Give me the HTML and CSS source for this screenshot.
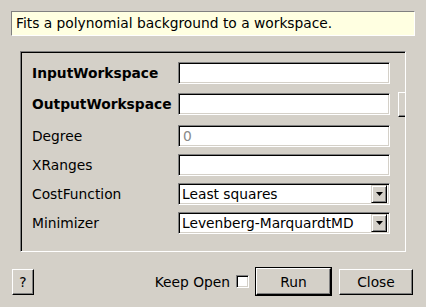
FILE: index.html
```html
<!DOCTYPE html>
<html>
<head>
<meta charset="utf-8">
<link rel="stylesheet" href="styles.css">
</head>
<body>
<div class="dialog">
  <div class="desc">Fits a polynomial background to a workspace.</div>
  <div class="frame">
    <div class="row r1">
      <span class="label bold">InputWorkspace</span>
      <span class="field"></span>
    </div>
    <div class="row r2">
      <span class="label bold">OutputWorkspace</span>
      <span class="field"></span>
      <span class="browse"></span>
    </div>
    <div class="row">
      <span class="label">Degree</span>
      <span class="field"><span class="ph">0</span></span>
    </div>
    <div class="row">
      <span class="label">XRanges</span>
      <span class="field"></span>
    </div>
    <div class="row">
      <span class="label">CostFunction</span>
      <span class="field combo"><span class="ctext">Least squares</span><span class="arrow"><svg width="7" height="4" viewBox="0 0 7 4"><path d="M0 0H7L3.5 4Z" fill="#000"/></svg></span></span>
    </div>
    <div class="row">
      <span class="label">Minimizer</span>
      <span class="field combo"><span class="ctext">Levenberg-MarquardtMD</span><span class="arrow"><svg width="7" height="4" viewBox="0 0 7 4"><path d="M0 0H7L3.5 4Z" fill="#000"/></svg></span></span>
    </div>
  </div>
  <div class="bottom">
    <span class="btn help">?</span>
    <span class="spacer"></span>
    <span class="keep">Keep Open</span>
    <span class="check"></span>
    <span class="btn run"><span class="inner">Run</span></span>
    <span class="btn close">Close</span>
  </div>
</div>
</body>
</html>
```

FILE: styles.css
```css
html, body {
  margin: 0;
  padding: 0;
  background: #d4d0c8;
}
body {
  width: 426px;
  height: 307px;
  overflow: hidden;
  font-family: "DejaVu Sans", sans-serif;
  font-size: 13.8px;
  color: #000;
}
.dialog {
  display: flex;
  flex-direction: column;
  padding-top: 11px;
}
.desc {
  box-sizing: border-box;
  margin-left: 11px;
  width: 404px;
  height: 25px;
  background: #ffffe1;
  border: 1px solid;
  border-color: #808080 #fff #fff #808080;
  padding-left: 4px;
  line-height: 22px;
  white-space: nowrap;
}
.frame {
  box-sizing: border-box;
  margin-top: 15px;
  margin-left: 20px;
  width: 386px;
  height: 201px;
  border: 1px solid;
  border-color: #808080 #fff #fff #808080;
  box-shadow: inset 1px 1px 0 #000;
  overflow: hidden;
  display: flex;
  flex-direction: column;
  gap: 7px;
  padding: 10px 0 0 11px;
}
.row {
  display: flex;
  align-items: center;
  height: 22px;
  flex: none;
}
.r1 { margin-bottom: 2px; }
.r2 { margin-bottom: 3px; }
.label {
  width: 146px;
  flex: none;
  white-space: nowrap;
}
.bold { font-weight: bold; }
.field {
  box-sizing: border-box;
  width: 212px;
  height: 22px;
  flex: none;
  background: #fff;
  border: 1px solid;
  border-color: #808080 #fff #fff #808080;
  box-shadow: inset 1px 1px 0 #000, inset -1px -1px 0 #d4d0c8;
  display: flex;
  align-items: center;
  padding-left: 4px;
}
.ph { color: #8a8a8a; }
.combo {
  padding-left: 3px;
  padding-right: 2px;
}
.ctext {
  flex: 1;
  white-space: nowrap;
}
.arrow {
  box-sizing: border-box;
  width: 16px;
  height: 18px;
  background: #d4d0c8;
  border: 1px solid;
  border-color: #d4d0c8 #000 #000 #d4d0c8;
  box-shadow: inset 1px 1px 0 #fff, inset -1px -1px 0 #808080;
  display: flex;
  align-items: center;
  justify-content: center;
}
.browse {
  box-sizing: border-box;
  flex: none;
  margin-left: 8px;
  align-self: flex-start;
  margin-top: -1px;
  width: 30px;
  height: 25px;
  background: #d4d0c8;
  border: 1px solid;
  border-color: #fff #000 #000 #fff;
  box-shadow: inset -1px -1px 0 #808080;
}
.bottom {
  display: flex;
  align-items: center;
  margin-top: 15px;
  height: 29px;
  padding-left: 12px;
  padding-right: 13px;
}
.spacer { flex: 1; }
.btn {
  box-sizing: border-box;
  background: #d4d0c8;
  border: 1px solid;
  border-color: #fff #000 #000 #fff;
  box-shadow: inset -1px -1px 0 #808080;
  display: flex;
  align-items: center;
  justify-content: center;
  flex: none;
}
.help {
  width: 22px;
  height: 26px;
}
.keep {
  white-space: nowrap;
  margin-right: 6px;
}
.check {
  box-sizing: border-box;
  width: 13px;
  height: 13px;
  background: #fff;
  border: 1px solid;
  border-color: #808080 #fff #fff #808080;
  box-shadow: inset 1px 1px 0 #000, inset -1px -1px 0 #d4d0c8;
  margin-right: 6px;
  flex: none;
}
.run {
  width: 77px;
  height: 29px;
  border: 1px solid #000;
  box-shadow: none;
  padding: 0;
}
.run .inner {
  box-sizing: border-box;
  width: 100%;
  height: 100%;
  border: 1px solid;
  border-color: #fff #000 #000 #fff;
  box-shadow: inset -1px -1px 0 #808080;
  display: flex;
  align-items: center;
  justify-content: center;
}
.close {
  width: 74px;
  height: 26px;
  margin-left: 7px;
}
```
